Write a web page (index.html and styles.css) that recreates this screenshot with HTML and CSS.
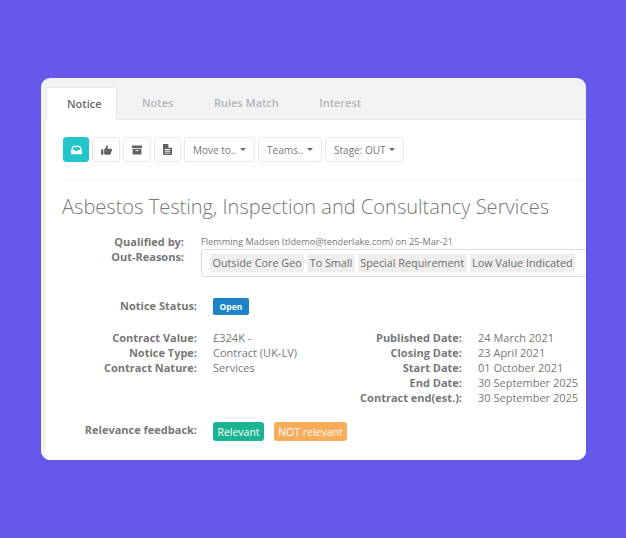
FILE: index.html
```html
<!DOCTYPE html>
<html lang="en">
<head>
<meta charset="utf-8">
<title>Notice</title>
<link rel="stylesheet" href="styles.css">
</head>
<body>
<main class="card">
  <nav class="tabs">
    <a class="tab active">Notice</a>
    <a class="tab">Notes</a>
    <a class="tab">Rules Match</a>
    <a class="tab">Interest</a>
  </nav>
  <section class="pane">
    <div class="toolbar">
      <button class="btn icon primary" aria-label="Inbox">
        <svg viewBox="0 0 14 12" width="11" height="10"><path fill="currentColor" d="M3 0.5h8a1 1 0 0 1 .9.6L14 6v4.500a1 1 0 0 1-1 1H1a1 1 0 0 1-1-1V6l2.100-4.900A1 1 0 0 1 3 .5zm.4 1.600L1.900 6h3l.8 1.500h2.600L9.100 6h3l-1.500-3.900z"/></svg>
      </button>
      <button class="btn icon wide" aria-label="Thumbs up">
        <svg viewBox="0 0 14 12" width="11" height="10"><path fill="currentColor" d="M0 5.500h3v6.500H0zM4 5.500 6.500 2.500V0.300C8 0 9 1 8.700 2.500L8.300 4.500H13c1 0 1.300 1 .9 1.700L12.300 11c-.2.600-.7 1-1.300 1H5.500L4 11z"/></svg>
      </button>
      <button class="btn icon wide" aria-label="Archive">
        <svg viewBox="0 0 12 12" width="10" height="10"><path fill="currentColor" fill-rule="evenodd" d="M0 .5h12v3H0zM.7 4.500h10.600V11.500H.7zM4.300 6v1.200h3.400V6z"/></svg>
      </button>
      <button class="btn icon" aria-label="Document">
        <svg viewBox="0 0 10 12" width="9" height="11"><path fill="currentColor" fill-rule="evenodd" d="M0 0h6l4 4v8H0zM6 0v4h4zM2 5.500v1h6v-1zM2 7.500v1h6v-1zM2 9.500v1h6v-1z"/></svg>
      </button>
      <button class="btn">Move to.. <span class="caret"></span></button>
      <button class="btn">Teams.. <span class="caret"></span></button>
      <button class="btn">Stage: OUT <span class="caret"></span></button>
    </div>
    <hr class="rule">
    <h1 class="title">Asbestos Testing, Inspection and Consultancy Services</h1>

    <div class="qualified">
      <span class="label">Qualified by:</span>
      <span class="by">Flemming Madsen (tldemo@tenderlake.com) on 25-Mar-21</span>
    </div>
    <div class="reasons-row">
      <span class="label">Out-Reasons:</span>
      <div class="tags">
        <span class="tag">Outside Core Geo</span>
        <span class="tag">To Small</span>
        <span class="tag">Special Requirement</span>
        <span class="tag">Low Value Indicated</span>
      </div>
    </div>

    <div class="status-row">
      <span class="label">Notice Status:</span>
      <span class="badge">Open</span>
    </div>

    <div class="details">
      <dl class="facts left">
        <dt>Contract Value:</dt><dd>£324K -</dd>
        <dt>Notice Type:</dt><dd>Contract (UK-LV)</dd>
        <dt>Contract Nature:</dt><dd>Services</dd>
      </dl>
      <dl class="facts right">
        <dt>Published Date:</dt><dd>24 March 2021</dd>
        <dt>Closing Date:</dt><dd>23 April 2021</dd>
        <dt>Start Date:</dt><dd>01 October 2021</dd>
        <dt>End Date:</dt><dd>30 September 2025</dd>
        <dt>Contract end(est.):</dt><dd>30 September 2025</dd>
      </dl>
    </div>

    <div class="feedback-row">
      <span class="label">Relevance feedback:</span>
      <button class="action green">Relevant</button>
      <button class="action orange">NOT relevant</button>
    </div>
  </section>
</main>
</body>
</html>
```

FILE: styles.css
```css
* { box-sizing: border-box; }
html, body { margin: 0; height: 100%; }
body {
  background: #6658ea;
  padding: 78px 40px 78px 41px;
  font-family: "Open Sans", sans-serif;
  font-size: 11px;
  color: #777;
  overflow: hidden;
}
.card {
  width: 545px;
  height: 382px;
  background: #f3f3f3;
  border-radius: 9px;
  overflow: hidden;
  padding-left: 5px;
  display: flex;
  flex-direction: column;
}
.tabs {
  height: 42px;
  padding-top: 9px;
  display: flex;
  flex: none;
  border-bottom: 1px solid #e7e7e7;
}
.tab {
  height: 32px;
  margin-left: 0.5px;
  padding: 0 20px;
  font-size: 11px;
  font-weight: 600;
  line-height: 32px;
  color: #aeb6c2;
}
.tab.active {
  width: 71px;
  margin-left: 0;
  margin-right: 4.5px;
  padding: 0 0 0 20px;
  background: #fff;
  color: #676a6c;
  border-radius: 3px 3px 0 0;
  border: 1px solid #e7e7e7;
  border-bottom: 0;
  height: 33px;
}
.pane {
  flex: 1;
  background: #fff;
  padding: 17px 0 0 17px;
  min-height: 0;
}
.toolbar { display: flex; gap: 3px; height: 25px; }
.btn {
  height: 25px;
  padding: 0 8px;
  border: 1px solid #e7eaec;
  border-radius: 3px;
  background: #fff;
  color: #777;
  font: 400 10px "Open Sans", sans-serif;
  display: inline-flex;
  align-items: center;
  gap: 4px;
  white-space: nowrap;
}
.btn.icon { width: 27px; padding: 0; justify-content: center; color: #5f6468; }
.btn.icon.wide { width: 28px; }
.btn.primary { width: 26px; background: #23c6c8; border-color: #23c6c8; color: #fff; }
.caret {
  width: 0; height: 0;
  border-left: 3px solid transparent;
  border-right: 3px solid transparent;
  border-top: 3px solid #676a6c;
}
.rule { margin: 17px 0 0; border: 0; border-top: 1px solid #f1f1f1; }
.title {
  margin: 12px 0 0 -1px;
  font-size: 20.060px;
  line-height: 30px;
  font-weight: 300;
  color: #777;
  white-space: nowrap;
}
.label {
  font-weight: 700;
  color: #777;
  text-align: right;
  flex: none;
  white-space: nowrap;
}
.qualified, .reasons-row, .status-row, .feedback-row { display: flex; }
.qualified { margin-top: 12px; line-height: 15px; height: 15px; }
.qualified .label, .reasons-row .label { width: 121px; }
.by { margin-left: 17px; font-size: 9.200px; line-height: 15px; color: #777; white-space: nowrap; }
.reasons-row { line-height: 15px; }
.tags {
  margin-left: 17px;
  width: 420px;
  height: 28px;
  flex: none;
  border: 1px solid #ddd;
  border-radius: 3px;
  padding: 4px 0 0 8px;
  display: flex;
  gap: 3px;
  white-space: nowrap;
}
.tag {
  height: 18px;
  padding: 0 2.500px;
  background: #eee;
  border-radius: 2px;
  line-height: 18px;
  font-size: 10.800px;
  color: #6c6c6c;
}
.status-row { margin-top: 21px; align-items: flex-start; line-height: 15px; }
.status-row .label, .feedback-row .label { width: 134px; }
.badge {
  margin-left: 16px;
  width: 36px;
  height: 17px;
  border-radius: 2px;
  background: #1c84c6;
  color: #fff;
  font-size: 8.500px;
  font-weight: 700;
  line-height: 17px;
  text-align: center;
}
.details { display: flex; margin-top: 15px; height: 77px; }
.facts {
  margin: 0;
  display: grid;
  grid-auto-rows: 15px;
  line-height: 15px;
  column-gap: 16px;
  align-content: start;
}
.facts dt { font-weight: 700; text-align: right; white-space: nowrap; }
.facts dd { margin: 0; white-space: nowrap; }
.facts.left { grid-template-columns: 134px 135px; }
.facts.right { grid-template-columns: 114px 110px; }
.feedback-row { margin-top: 15px; align-items: flex-start; line-height: 15px; }
.action {
  height: 19px;
  padding: 0;
  border: 0;
  border-radius: 3px;
  color: #fff;
  font: 400 10.500px "Open Sans", sans-serif;
}
.action.green { margin-left: 16px; width: 51px; background: #1ab394; }
.action.orange { margin-left: 10px; width: 73px; background: #f8ac59; }
```
